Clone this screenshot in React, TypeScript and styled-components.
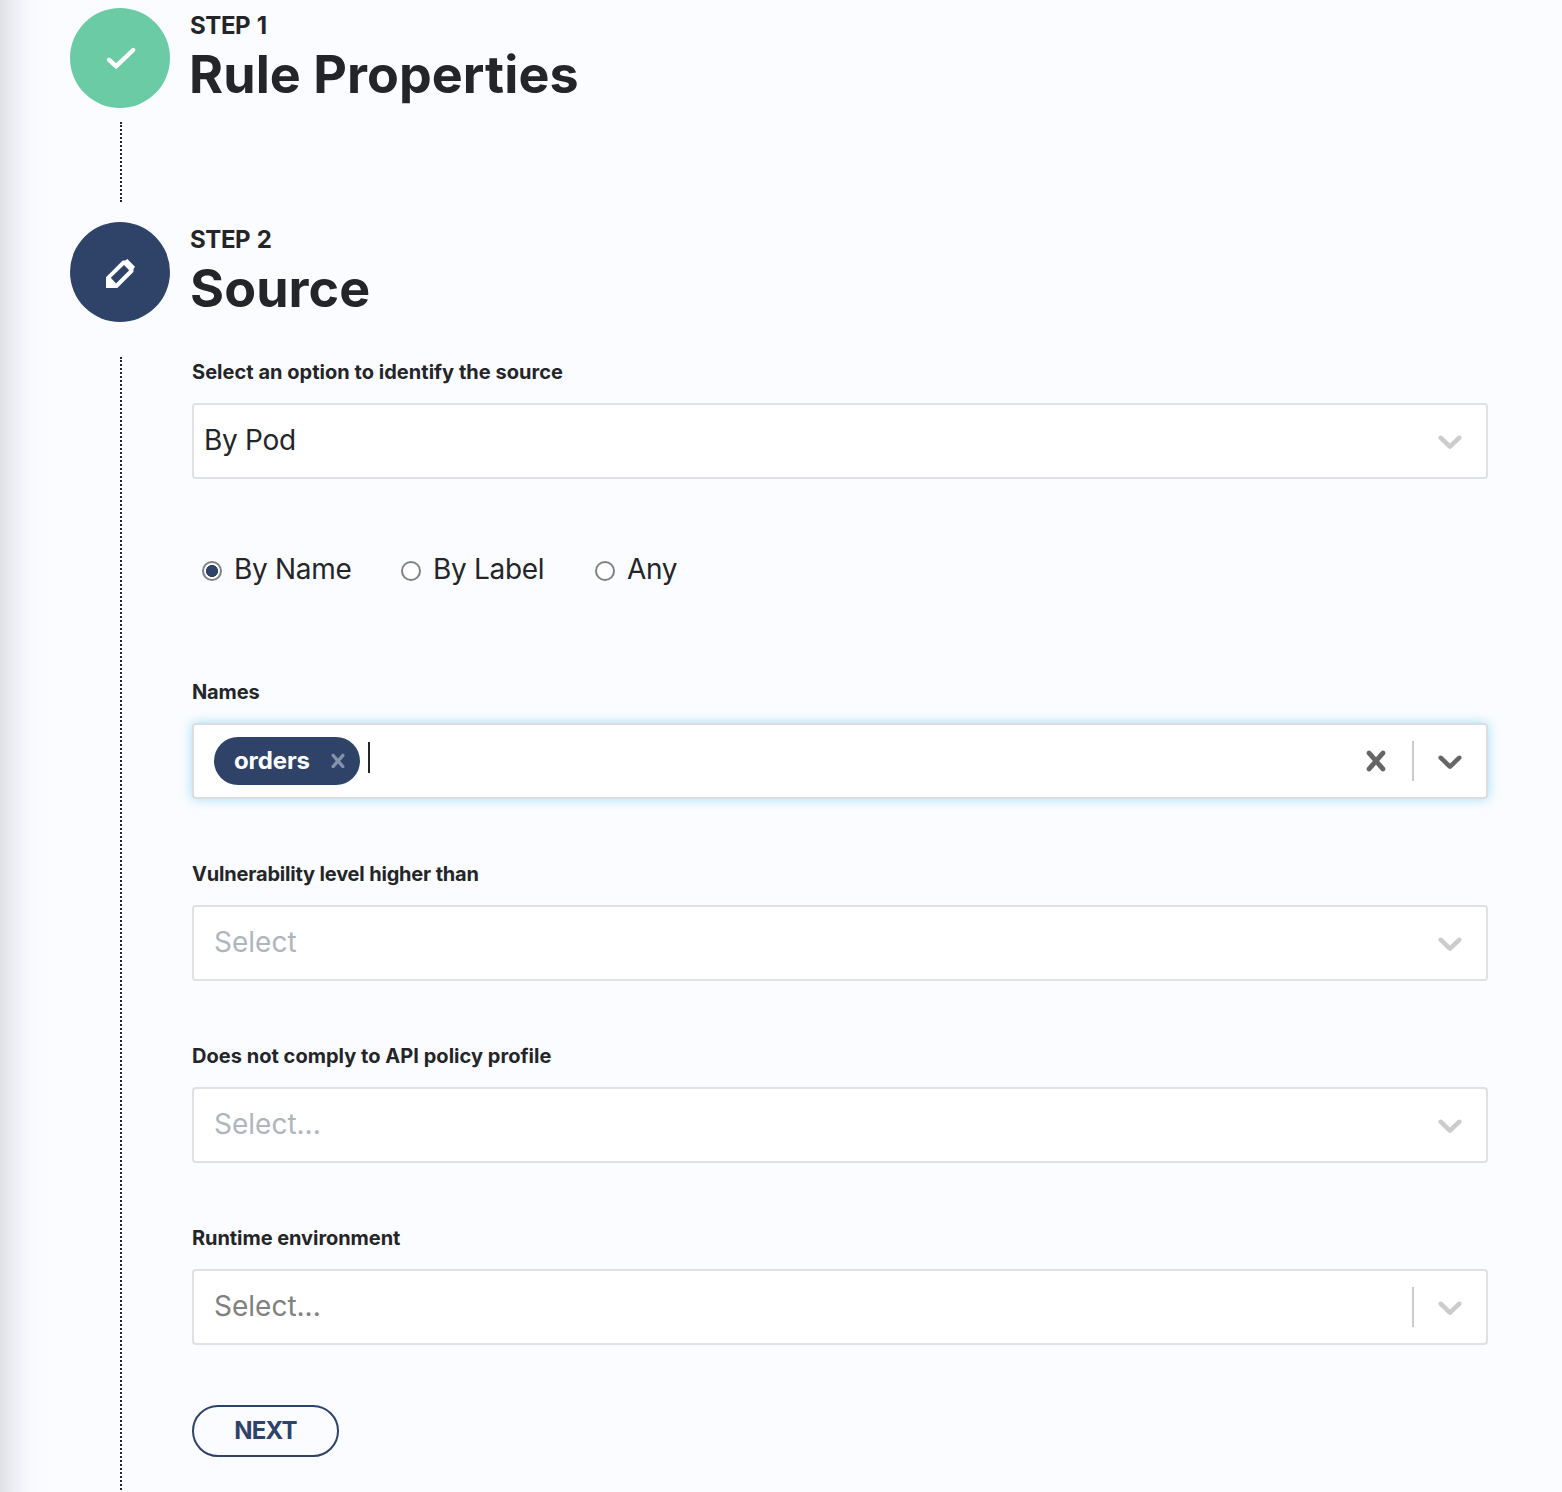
import React from "react";
import styled, { createGlobalStyle } from "styled-components";

const navy = "#2f4369";
const ink = "#242529";

const GlobalStyle = createGlobalStyle`
  * { box-sizing: border-box; }
  body {
    margin: 0;
    background: #fbfcff;
    color: ${ink};
    font-family: Inter, "Liberation Sans", sans-serif;
  }
`;

const Page = styled.main`
  height: 1492px;
  overflow: hidden;
  padding: 8px 74px 0 70px;
  background: linear-gradient(
      to right,
      #dfe0e6 0,
      #e6e7ec 6px,
      #eff0f5 16px,
      #f6f7fb 26px,
      #fafbfe 38px,
      #fbfcff 46px
    )
    no-repeat left / 46px 100% #fbfcff;
`;

const Step = styled.section<{ $height: number }>`
  display: grid;
  grid-template-columns: 100px 1fr;
  column-gap: 20px;
  height: ${(p) => p.$height}px;
`;

const Rail = styled.div`
  display: flex;
  flex-direction: column;
  align-items: center;
`;

const Badge = styled.div<{ $color: string }>`
  flex: none;
  display: grid;
  place-items: center;
  width: 100px;
  height: 100px;
  border-radius: 50%;
  background: ${(p) => p.$color};
`;

const Connector = styled.div<{ $gap: number; $length: number }>`
  flex: none;
  margin: ${(p) => p.$gap}px 0 0 2px;
  height: ${(p) => p.$length}px;
  border-left: 2px dotted ${ink};
`;

const Eyebrow = styled.div`
  height: 34px;
  padding-top: 1px;
  line-height: 34px;
  font-size: 24px;
  font-weight: 700;
  letter-spacing: -0.4px;
  word-spacing: 1.2px;
  white-space: nowrap;
`;

const Title = styled.h2<{ $spacing: number; $shift?: number }>`
  margin: 0 0 0 ${(p) => p.$shift ?? 0}px;
  height: 66px;
  line-height: 66px;
  font-size: 52px;
  font-weight: 700;
  letter-spacing: ${(p) => p.$spacing}px;
  white-space: nowrap;
`;

const Form = styled.div`
  display: flex;
  flex-direction: column;
  align-items: flex-start;
  padding: 36px 0 0 2px;
`;

const Field = styled.div<{ $gap: number }>`
  width: 100%;
  margin-bottom: ${(p) => p.$gap}px;
`;

const Label = styled.div<{ $spacing: number }>`
  height: 28px;
  line-height: 28px;
  margin-bottom: 17px;
  font-size: 20px;
  font-weight: 700;
  letter-spacing: ${(p) => p.$spacing}px;
  white-space: nowrap;
`;

const Control = styled.div<{ $focused?: boolean }>`
  display: flex;
  align-items: center;
  height: 76px;
  border: 2px solid ${(p) => (p.$focused ? "#dcdde1" : "#dfe1e5")};
  border-radius: 4px;
  background: #fff;
  box-shadow: ${(p) => (p.$focused ? "0 0 12px #9fdcf3" : "none")};
`;

const Value = styled.div<{ $color: string; $indent: number; $spacing: number }>`
  flex: 1;
  padding: 0 0 2px ${(p) => p.$indent}px;
  font-size: 28px;
  line-height: 40px;
  letter-spacing: ${(p) => p.$spacing}px;
  color: ${(p) => p.$color};
`;

const Tags = styled.div`
  flex: 1;
  display: flex;
  align-items: center;
  padding-left: 20px;
`;

const Tag = styled.div`
  display: flex;
  align-items: center;
  justify-content: space-between;
  width: 146px;
  height: 48px;
  padding: 0 8px 0 20px;
  border-radius: 24px;
  background: ${navy};
  color: #fff;
  font-size: 24px;
  font-weight: 700;
  letter-spacing: -0.1px;
`;

const TagText = styled.span`
  padding-bottom: 2px;
`;

const TagRemove = styled.span`
  display: flex;
  color: #8592a9;
`;

const Caret = styled.span`
  width: 2px;
  height: 31px;
  margin: 0 0 7px 8px;
  background: ${ink};
`;

const Divider = styled.span`
  width: 2px;
  height: 40px;
  background: #ccc;
`;

const Indicator = styled.span<{ $color: string }>`
  display: flex;
  padding: 16px;
  color: ${(p) => p.$color};
`;

const RadioGroup = styled.div`
  display: flex;
  height: 40px;
  margin: -8px 0 89px 10px;
`;

const Option = styled.label<{ $width: number }>`
  display: flex;
  align-items: center;
  gap: 12px;
  width: ${(p) => p.$width}px;
  font-size: 28px;
  letter-spacing: -0.3px;
  white-space: nowrap;
`;

const Radio = styled.span<{ $checked?: boolean }>`
  flex: none;
  width: 20px;
  height: 20px;
  margin-top: 3px;
  border: 2px solid #808184;
  border-radius: 50%;
  background: ${(p) =>
    p.$checked ? `radial-gradient(circle, ${navy} 5.7px, #fff 6.3px)` : "#fff"};
`;

const NextButton = styled.button`
  width: 147px;
  height: 52px;
  padding: 0;
  border: 2px solid ${navy};
  border-radius: 26px;
  background: transparent;
  color: ${navy};
  font: 700 24px/46px Inter, "Liberation Sans", sans-serif;
  letter-spacing: -0.8px;
`;

const Chevron = () => (
  <svg width="40" height="40" viewBox="0 0 20 20" fill="currentColor">
    <path d="M4.516 7.548c0.436-0.446 1.043-0.481 1.576 0l3.908 3.747 3.908-3.747c0.533-0.481 1.141-0.446 1.574 0 0.436 0.445 0.408 1.197 0 1.615-0.406 0.418-4.695 4.502-4.695 4.502-0.217 0.223-0.502 0.335-0.787 0.335s-0.57-0.112-0.789-0.335c0 0-4.287-4.084-4.695-4.502s-0.436-1.17 0-1.615z" />
  </svg>
);

const Cross = ({ size }: { size: number }) => (
  <svg width={size} height={size} viewBox="0 0 20 20" fill="currentColor">
    <path d="M14.348 14.849c-0.469 0.469-1.229 0.469-1.697 0l-2.651-3.030-2.651 3.029c-0.469 0.469-1.229 0.469-1.697 0-0.469-0.469-0.469-1.229 0-1.697l2.758-3.15-2.759-3.152c-0.469-0.469-0.469-1.228 0-1.697s1.228-0.469 1.697 0l2.652 3.031 2.651-3.031c0.469-0.469 1.228-0.469 1.697 0s0.469 1.229 0 1.697l-2.758 3.152 2.758 3.15c0.469 0.469 0.469 1.229 0 1.698z" />
  </svg>
);

const CheckIcon = () => (
  <svg width="40" height="40" viewBox="0 0 40 40" fill="none">
    <path d="M9 21.8L16.2 28.2L33.2 12" stroke="#fff" strokeWidth="4.4" strokeLinecap="round" />
  </svg>
);

const PencilIcon = () => (
  <svg width="40" height="40" viewBox="0 0 40 40">
    <path
      fill="#fff"
      fillRule="evenodd"
      d="M6 36V25.3L22.7 8.4L25.3 8.6L27.3 7L35 14.7L33.6 16.8L33.4 20L17.3 36ZM10.8 25.8L16 31.4L29.2 18.2L24 13Z"
    />
  </svg>
);

interface SelectProps {
  label: string;
  spacing: number;
  text: string;
  textSpacing?: number;
  color: string;
  indent?: number;
  gap: number;
  divider?: boolean;
}

const Select = ({
  label,
  spacing,
  text,
  textSpacing = 0,
  color,
  indent = 20,
  gap,
  divider,
}: SelectProps) => (
  <Field $gap={gap}>
    <Label $spacing={spacing}>{label}</Label>
    <Control>
      <Value $color={color} $indent={indent} $spacing={textSpacing}>{text}</Value>
      {divider && <Divider />}
      <Indicator $color="#ccc"><Chevron /></Indicator>
    </Control>
  </Field>
);

export default function App() {
  return (
    <>
      <GlobalStyle />
      <Page>
        <Step $height={214}>
          <Rail>
            <Badge $color="#6bcba5"><CheckIcon /></Badge>
            <Connector $gap={14} $length={80} />
          </Rail>
          <div>
            <Eyebrow>STEP 1</Eyebrow>
            <Title $spacing={0.07} $shift={-1}>Rule Properties</Title>
          </div>
        </Step>
        <Step $height={1270}>
          <Rail>
            <Badge $color={navy}><PencilIcon /></Badge>
            <Connector $gap={35} $length={1133} />
          </Rail>
          <div>
            <Eyebrow>STEP 2</Eyebrow>
            <Title $spacing={0.1}>Source</Title>
            <Form>
              <Select
                label="Select an option to identify the source"
                spacing={0.03}
                text="By Pod"
                textSpacing={-0.28}
                color={ink}
                indent={10}
                gap={78}
              />
              <RadioGroup>
                <Option $width={199}><Radio $checked />By Name</Option>
                <Option $width={194}><Radio />By Label</Option>
                <Option $width={90}><Radio />Any</Option>
              </RadioGroup>
              <Field $gap={61}>
                <Label $spacing={-0.15}>Names</Label>
                <Control $focused>
                  <Tags>
                    <Tag>
                      <TagText>orders</TagText>
                      <TagRemove><Cross size={28} /></TagRemove>
                    </Tag>
                    <Caret />
                  </Tags>
                  <Indicator $color="#666"><Cross size={40} /></Indicator>
                  <Divider />
                  <Indicator $color="#666"><Chevron /></Indicator>
                </Control>
              </Field>
              <Select label="Vulnerability level higher than" spacing={-0.18} text="Select" color="#b0b5bd" gap={61} />
              <Select label="Does not comply to API policy profile" spacing={0.03} text="Select..." color="#b0b5bd" gap={61} />
              <Select label="Runtime environment" spacing={-0.06} text="Select..." color="#808080" gap={60} divider />
              <NextButton>NEXT</NextButton>
            </Form>
          </div>
        </Step>
      </Page>
    </>
  );
}
